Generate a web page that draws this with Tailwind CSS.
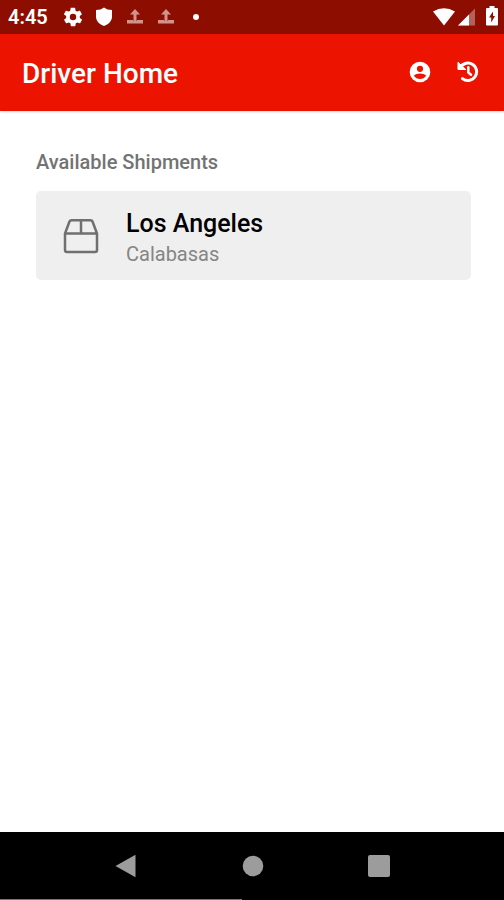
<!DOCTYPE html>
<html lang="en">

<head>
  <meta charset="UTF-8">
  <meta name="viewport" content="width=device-width, initial-scale=1">
  <title>Driver Home</title>
  <script src="https://cdn.jsdelivr.net/npm/@tailwindcss/browser@4"></script>
</head>

<body class="min-h-screen flex flex-col bg-white font-[Roboto,sans-serif]">
  <!-- Status bar -->
  <div class="h-[34px] bg-[#8d0e00] text-white flex items-center justify-between pl-2 pr-1">
    <div class="flex items-center">
      <span class="w-[54px] text-xl leading-6 font-semibold">4:45</span>
      <svg class="size-[22px]" viewBox="0 0 24 24" fill="currentColor" aria-hidden="true">
        <path d="M19.4 13c0-.3.1-.6.1-1s0-.7-.1-1l2.1-1.6c.2-.2.2-.4.1-.6l-2-3.500c-.1-.2-.4-.3-.6-.2l-2.500 1c-.5-.4-1.100-.7-1.700-1l-.4-2.600c0-.3-.2-.5-.5-.5h-4c-.2 0-.5.2-.5.4l-.4 2.700c-.6.2-1.100.6-1.700 1l-2.500-1c-.2-.1-.5 0-.6.2l-2 3.500c-.1.2-.1.4.1.6L4.600 11c0 .3-.1.6-.1 1s0 .7.1 1l-2.100 1.600c-.2.2-.2.4-.1.6l2 3.500c.1.2.4.3.6.2l2.500-1c.5.4 1.100.7 1.700 1l.4 2.600c0 .3.2.5.5.5h4c.2 0 .5-.2.5-.4l.4-2.700c.6-.2 1.100-.6 1.700-1l2.500 1c.2.1.5 0 .6-.2l2-3.500c.1-.2.1-.4-.1-.6L19.400 13zM12 15.500a3.500 3.500 0 1 1 0-7 3.500 3.500 0 0 1 0 7z" />
      </svg>
      <svg class="ml-[9px] size-[22px]" viewBox="0 0 22 22" fill="currentColor" aria-hidden="true">
        <path d="M11 1.500Q14 4 19 4V10.500C19 15 15.500 18.500 11 20C6.500 18.500 3 15 3 10.500V4Q8 4 11 1.500Z" />
      </svg>
      <svg class="ml-[9px] size-[22px] text-[#d0948c]" viewBox="0 0 22 22" fill="currentColor" aria-hidden="true">
        <path d="M11 3l5 5.500h-3.500V15h-3V8.500H6zM3 14h6v1h4v-1h6V17.500H3z" />
      </svg>
      <svg class="ml-[9px] size-[22px] text-[#d0948c]" viewBox="0 0 22 22" fill="currentColor" aria-hidden="true">
        <path d="M11 3l5 5.500h-3.500V15h-3V8.500H6zM3 14h6v1h4v-1h6V17.500H3z" />
      </svg>
      <span class="ml-4 size-[6px] rounded-full bg-white"></span>
    </div>
    <div class="flex items-center">
      <svg class="w-[24px] h-[20px]" viewBox="0 0 24 20" fill="currentColor" aria-hidden="true">
        <path d="M1 4.500Q12-2 23 4.500L12 18.500z" />
      </svg>
      <svg class="ml-[2px] w-[18px] h-[20px]" viewBox="0 0 18 20" fill="currentColor" aria-hidden="true">
        <path d="M17 1.500V18.500H0z" fill-opacity=".35" />
        <path d="M11 7.500V18.500H0z" />
      </svg>
      <svg class="ml-2 w-[16px] h-[22px]" viewBox="0 0 16 22" fill="currentColor" aria-hidden="true">
        <path fill-rule="evenodd" d="M5.500 0h5v2H13q1 0 1 1V18.500q0 1-1 1H3q-1 0-1-1V3q0-1 1-1h2.500zM9 5.500L5 11.500h2.200V16.500L11 10H9z" />
      </svg>
    </div>
  </div>

  <!-- App bar -->
  <header class="h-[77px] bg-[#ec1400] text-white flex items-center justify-between px-[22px] shadow-sm">
    <h1 class="pt-[2px] text-[28px] leading-8 font-medium">Driver Home</h1>
    <div class="flex items-center gap-5 pb-[2px]">
      <button type="button" aria-label="Profile" class="size-7 grid place-items-center">
        <svg class="size-[22px]" viewBox="0 0 22 22" aria-hidden="true">
          <circle cx="11" cy="11" r="10.300" fill="currentColor" />
          <circle cx="11" cy="7.800" r="3.100" fill="#ec1400" />
          <path d="M4.800 14.500Q7 12.600 11 12.600T17.200 14.500Q15 18 11 18T4.800 14.500z" fill="#ec1400" />
        </svg>
      </button>
      <button type="button" aria-label="History" class="size-7 grid place-items-center">
        <svg class="size-[22px]" viewBox="0 0 22 22" fill="none" stroke="currentColor" aria-hidden="true">
          <path d="M3.500 6.200A8.700 8.700 0 1 1 5.500 17.600" stroke-width="3" stroke-linecap="round" />
          <path d="M1 1.200L8.800 8.500H1z" fill="currentColor" stroke-width="1" stroke-linejoin="round" />
          <path d="M11.300 6.300V11.500L14 13.700" stroke-width="2.500" stroke-linecap="round" />
        </svg>
      </button>
    </div>
  </header>

  <!-- Shipments -->
  <main class="flex-1 px-9 pt-[39px]">
    <h2 class="text-xl leading-6 font-medium text-[#737373]">Available Shipments</h2>
    <a href="#" class="mt-[17px] -mr-[3px] h-[89px] flex items-center rounded-[5px] bg-[#efefef] pl-[27px]">
      <svg class="size-9" viewBox="0 0 36 36" fill="none" stroke="#707070" stroke-width="2.500" stroke-linejoin="round" aria-hidden="true">
        <path d="M2 15.500L6.500 3.500Q7 2.200 8.500 2.200H27.500Q29 2.200 29.500 3.500L34 15.500V32Q34 34 32 34H4Q2 34 2 32zM2 15.500H34M18 2.200V15.500" />
      </svg>
      <span class="ml-[27px] pt-[5px] flex flex-col">
        <span class="text-[25px] leading-8 font-medium text-black">Los Angeles</span>
        <span class="text-xl leading-7 text-[#858585]">Calabasas</span>
      </span>
    </a>
  </main>

  <!-- System navigation -->
  <nav class="h-[68px] bg-black text-[#9c9c9c] pl-16 pr-[62px] grid grid-cols-3 place-items-center relative">
    <button type="button" aria-label="Back">
      <svg class="size-6" viewBox="0 0 24 24" fill="currentColor" aria-hidden="true">
        <path d="M.5 12L20.500 .800V23.200z" />
      </svg>
    </button>
    <button type="button" aria-label="Home">
      <svg class="size-6" viewBox="0 0 24 24" fill="currentColor" aria-hidden="true">
        <circle cx="12" cy="12" r="10.300" />
      </svg>
    </button>
    <button type="button" aria-label="Recent apps">
      <svg class="size-6" viewBox="0 0 24 24" fill="currentColor" aria-hidden="true">
        <rect x="1" y="1" width="22" height="22" rx="2" />
      </svg>
    </button>
    <span class="absolute left-0 bottom-0 w-[48%] h-px bg-[#777777]"></span>
  </nav>
</body>

</html>
